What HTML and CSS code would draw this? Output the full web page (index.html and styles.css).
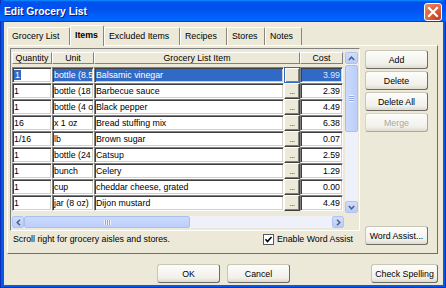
FILE: index.html
```html
<!DOCTYPE html>
<html>
<head>
<meta charset="utf-8">
<title>Edit Grocery List</title>
<link rel="stylesheet" href="styles.css">
</head>
<body>
<div class="window">
  <div class="titlebar">
    <span class="title">Edit Grocery List</span>
    <span class="close"><svg width="12" height="12" viewBox="0 0 12 12"><path d="M2 2 L10 10 M10 2 L2 10" stroke="#fff" stroke-width="2.2" stroke-linecap="square"/></svg></span>
  </div>
  <div class="client">
    <div class="tabs">
      <div class="tab t1">Grocery List</div>
      <div class="tab active t2">Items</div>
      <div class="tab t3">Excluded Items</div>
      <div class="tab t4">Recipes</div>
      <div class="tab t5">Stores</div>
      <div class="tab t6">Notes</div>
    </div>
    <div class="panel">
      <div class="left">
        <div class="grid">
          <div class="grid-top">
            <div class="table">
              <div class="hdr">
                <div class="hc c-qty">Quantity</div>
                <div class="hc c-unit">Unit</div>
                <div class="hc c-itemwide">Grocery List Item</div>
                <div class="hc c-cost">Cost</div>
              </div>
              <div class="row sel">
                <div class="cell c-qty"><span class="hl">1</span></div>
                <div class="cell c-unit">bottle (8.5 oz)</div>
                <div class="cell c-item">Balsamic vinegar</div>
                <div class="ebtn focus"></div>
                <div class="cell c-cost">3.99</div>
              </div>
              <div class="row">
                <div class="cell c-qty">1</div>
                <div class="cell c-unit">bottle (18 oz)</div>
                <div class="cell c-item">Barbecue sauce</div>
                <div class="ebtn">...</div>
                <div class="cell c-cost">2.39</div>
              </div>
              <div class="row">
                <div class="cell c-qty">1</div>
                <div class="cell c-unit">bottle (4 oz)</div>
                <div class="cell c-item">Black pepper</div>
                <div class="ebtn">...</div>
                <div class="cell c-cost">4.49</div>
              </div>
              <div class="row">
                <div class="cell c-qty">16</div>
                <div class="cell c-unit">x 1 oz</div>
                <div class="cell c-item">Bread stuffing mix</div>
                <div class="ebtn">...</div>
                <div class="cell c-cost">6.38</div>
              </div>
              <div class="row">
                <div class="cell c-qty">1/16</div>
                <div class="cell c-unit">lb</div>
                <div class="cell c-item">Brown sugar</div>
                <div class="ebtn">...</div>
                <div class="cell c-cost">0.07</div>
              </div>
              <div class="row">
                <div class="cell c-qty">1</div>
                <div class="cell c-unit">bottle (24 oz)</div>
                <div class="cell c-item">Catsup</div>
                <div class="ebtn">...</div>
                <div class="cell c-cost">2.59</div>
              </div>
              <div class="row">
                <div class="cell c-qty">1</div>
                <div class="cell c-unit">bunch</div>
                <div class="cell c-item">Celery</div>
                <div class="ebtn">...</div>
                <div class="cell c-cost">1.29</div>
              </div>
              <div class="row">
                <div class="cell c-qty">1</div>
                <div class="cell c-unit">cup</div>
                <div class="cell c-item">cheddar cheese, grated</div>
                <div class="ebtn">...</div>
                <div class="cell c-cost">0.00</div>
              </div>
              <div class="row">
                <div class="cell c-qty">1</div>
                <div class="cell c-unit">jar (8 oz)</div>
                <div class="cell c-item">Dijon mustard</div>
                <div class="ebtn">...</div>
                <div class="cell c-cost">4.49</div>
              </div>
            </div>
            <div class="vscroll">
              <div class="sb-btn"><svg width="7" height="5" viewBox="0 0 7 5"><polyline points="0.8,4 3.5,1.2 6.2,4" fill="none" stroke="#4d6185" stroke-width="1.5"/></svg></div>
              <div class="vtrack">
                <div class="vthumb"><span class="grip-v"></span></div>
              </div>
              <div class="sb-btn"><svg width="7" height="5" viewBox="0 0 7 5"><polyline points="0.8,1 3.5,3.8 6.2,1" fill="none" stroke="#4d6185" stroke-width="1.5"/></svg></div>
            </div>
          </div>
          <div class="hscroll-row">
            <div class="hscroll">
              <div class="sb-btn h"><svg width="5" height="7" viewBox="0 0 5 7"><polyline points="4,0.8 1.2,3.5 4,6.2" fill="none" stroke="#4d6185" stroke-width="1.5"/></svg></div>
              <div class="hthumb"><span class="grip-h"></span></div>
              <div class="htrack"></div>
              <div class="sb-btn h"><svg width="5" height="7" viewBox="0 0 5 7"><polyline points="1,0.8 3.8,3.5 1,6.2" fill="none" stroke="#4d6185" stroke-width="1.5"/></svg></div>
            </div>
            <div class="corner"></div>
          </div>
        </div>
        <div class="status">
          <span>Scroll right for grocery aisles and stores.</span>
          <label class="chk"><span class="box"><svg width="9" height="9" viewBox="0 0 9 9"><polyline points="1.5,4.2 3.5,6.5 7.5,2" fill="none" stroke="#000" stroke-width="1.6"/></svg></span><span>Enable Word Assist</span></label>
        </div>
      </div>
      <div class="side">
        <div class="btn">Add</div>
        <div class="btn">Delete</div>
        <div class="btn">Delete All</div>
        <div class="btn disabled">Merge</div>
        <div class="btn push">Word Assist...</div>
      </div>
    </div>
    <div class="footer">
      <div class="btn ok">OK</div>
      <div class="btn cancel">Cancel</div>
      <div class="btn spell">Check Spelling</div>
    </div>
  </div>
</div>
</body>
</html>
```
FILE: styles.css
```css
* { box-sizing: border-box; }
html, body { margin: 0; padding: 0; }
body {
  width: 446px;
  height: 288px;
  overflow: hidden;
  background: #0054e3;
  font-family: "Liberation Sans", Arial, sans-serif;
  font-size: 8.8px;
  color: #000;
}
.window {
  width: 446px;
  height: 288px;
  display: flex;
  flex-direction: column;
  background: #0757e8;
  border: 1px solid #0a2fb8;
  border-top: none;
}
.titlebar {
  height: 22px;
  flex: none;
  display: flex;
  align-items: center;
  justify-content: space-between;
  padding: 1px 3px 0 4px;
  margin: 0 -1px;
  background: linear-gradient(180deg, #0997ff, #0053ee 8%, #0050ee 40%, #06f 88%, #06f 93%, #005bff 95%, #003dd7 96%, #003dd7);
  border-radius: 6px 6px 0 0;
}
.title {
  color: #fff;
  font-weight: bold;
  font-size: 10.3px;
  text-shadow: 1px 1px 0 #0a1883;
}
.close {
  width: 18px;
  height: 18px;
  margin-right: 1px;
  border: 1px solid #fff;
  border-radius: 3px;
  background: radial-gradient(circle at 80% 85%, #c3401d, #e36a45 60%, #ef8e6f);
  display: flex;
  align-items: center;
  justify-content: center;
}
.client {
  flex: 1;
  margin: 0 2px 2px 3px;
  background: #ece9d8;
  padding-top: 3px;
  display: flex;
  flex-direction: column;
}
.tabs {
  display: flex;
  align-items: flex-end;
  height: 20px;
  padding-left: 3px;
  position: relative;
  z-index: 1;
}
.tab {
  height: 18px;
  line-height: 16px;
  padding-left: 4px;
  border-top: 1px solid #fff;
  border-left: 1px solid #fff;
  border-right: 1px solid #8a877a;
  border-radius: 2px 2px 0 0;
  white-space: nowrap;
  background: #ece9d8;
}
.tab.active {
  height: 21px;
  line-height: 18px;
  margin-bottom: -1px;
  font-weight: bold;
}
.t1 { width: 63px; }
.t2 { width: 34px; }
.t3 { width: 76px; }
.t4 { width: 47px; }
.t5 { width: 38px; }
.t6 { width: 37px; }
.panel {
  width: 431px;
  height: 209px;
  margin-left: 3px;
  border: 1px solid;
  border-color: #fff #716f64 #716f64 #fff;
  padding: 2px 0 0 2px;
  display: flex;
}
.left {
  width: 350px;
  display: flex;
  flex-direction: column;
}
.grid {
  width: 350px;
  height: 183px;
  border: 1px solid;
  border-color: #808080 #fff #fff #808080;
  padding: 3px 1px 2px 1px;
  display: flex;
  flex-direction: column;
}
.grid-top {
  display: flex;
  align-items: flex-start;
  gap: 2px;
}
.table { width: 331px; }
.hdr {
  display: flex;
  height: 12px;
  margin-bottom: 3px;
}
.hc {
  height: 12px;
  line-height: 10px;
  text-align: center;
  border: 1px solid;
  border-color: #fff #808080 #808080 #fff;
  background: #ece9d8;
  white-space: nowrap;
  overflow: hidden;
}
.c-qty { width: 40px; }
.c-unit { width: 42px; }
.c-item { width: 190px; }
.c-itemwide { width: 206px; }
.c-cost { width: 43px; }
.row {
  display: flex;
  height: 16px;
}
.cell {
  height: 16px;
  border: 1px solid;
  border-color: #808080 #fff #fff #808080;
  box-shadow: inset 1px 1px 0 #404040, inset -1px -1px 0 #d4d0c8;
  background: #fff;
  padding: 0 0 0 1px;
  line-height: 14px;
  white-space: nowrap;
  overflow: hidden;
}
.cell.c-cost {
  text-align: right;
  padding: 0 2px 0 0;
}
.row.sel .cell.c-unit,
.row.sel .cell.c-item,
.row.sel .cell.c-cost {
  background: #316ac5;
  color: #fff;
}
.row.sel .cell.c-cost { color: #dfe8ff; }
.hl {
  background: #316ac5;
  color: #fff;
  padding: 0 1px;
}
.ebtn {
  width: 16px;
  height: 16px;
  border: 1px solid;
  border-color: #fff #404040 #404040 #fff;
  box-shadow: inset -1px -1px 0 #808080;
  background: #ece9d8;
  font-size: 8px;
  line-height: 15px;
  letter-spacing: -0.5px;
  text-align: center;
  color: #333;
  overflow: hidden;
}
.ebtn.focus {
  border-color: #316ac5;
  box-shadow: inset 1px 1px 0 #fff, inset -1px -1px 0 #808080;
}
.vscroll {
  width: 13px;
  height: 161px;
  display: flex;
  flex-direction: column;
  background: #eef1f9;
}
.sb-btn {
  width: 13px;
  height: 12px;
  flex: none;
  border: 1px solid #aec3f3;
  border-radius: 2px;
  background: linear-gradient(#d2ddfb, #b9cbf7);
  display: flex;
  align-items: center;
  justify-content: center;
}
.sb-btn.h { width: 12px; }
.vtrack {
  flex: 1;
  padding-top: 1px;
}
.vthumb {
  height: 67px;
  border: 1px solid #a9bff3;
  border-radius: 2px;
  background: linear-gradient(to right, #cbd9fc, #bccffa);
  display: flex;
  align-items: center;
  justify-content: center;
}
.grip-v {
  width: 5px;
  height: 7px;
  background: repeating-linear-gradient(#eef3ff 0 1px, #8ea7e0 1px 2px);
}
.hscroll-row {
  display: flex;
  gap: 1px;
  margin-top: 3px;
  height: 12px;
}
.hscroll {
  width: 332px;
  height: 12px;
  display: flex;
  background: #eef1f9;
}
.hthumb {
  width: 166px;
  height: 12px;
  border: 1px solid #a9bff3;
  border-radius: 2px;
  background: linear-gradient(#cbd9fc, #bccffa);
  display: flex;
  align-items: center;
  justify-content: center;
}
.grip-h {
  width: 7px;
  height: 5px;
  background: repeating-linear-gradient(to right, #eef3ff 0 1px, #8ea7e0 1px 2px);
}
.htrack { flex: 1; }
.corner {
  width: 13px;
  height: 12px;
  background: #ece9d8;
}
.status {
  height: 16px;
  display: flex;
  align-items: center;
  justify-content: space-between;
  padding: 0 7px 0 3px;
  white-space: nowrap;
}
.chk {
  display: flex;
  align-items: center;
  gap: 3px;
}
.box {
  width: 11px;
  height: 11px;
  border: 1px solid #5a5a5a;
  background: #fff;
  display: flex;
  align-items: center;
  justify-content: center;
}
.side {
  width: 63px;
  margin-left: 5px;
  display: flex;
  flex-direction: column;
  gap: 2px;
  padding: 2px 0 8px 0;
}
.btn {
  height: 19px;
  flex: none;
  border: 1px solid;
  border-color: #c9c6b8 #6f6b60 #6f6b60 #c9c6b8;
  border-radius: 3px;
  background: linear-gradient(#fdfdfb, #f1f0ea 75%, #dedbcf);
  display: flex;
  align-items: center;
  justify-content: center;
  white-space: nowrap;
}
.btn.disabled {
  color: #aca899;
  border-color: #d8d5c8 #aca899 #aca899 #d8d5c8;
}
.btn.push { margin-top: auto; }
.footer {
  flex: 1;
  display: flex;
  align-items: flex-start;
  padding: 10px 5px 0 153px;
}
.ok { width: 63px; }
.cancel { width: 63px; margin-left: 7px; }
.spell { width: 67px; margin-left: auto; }
```
